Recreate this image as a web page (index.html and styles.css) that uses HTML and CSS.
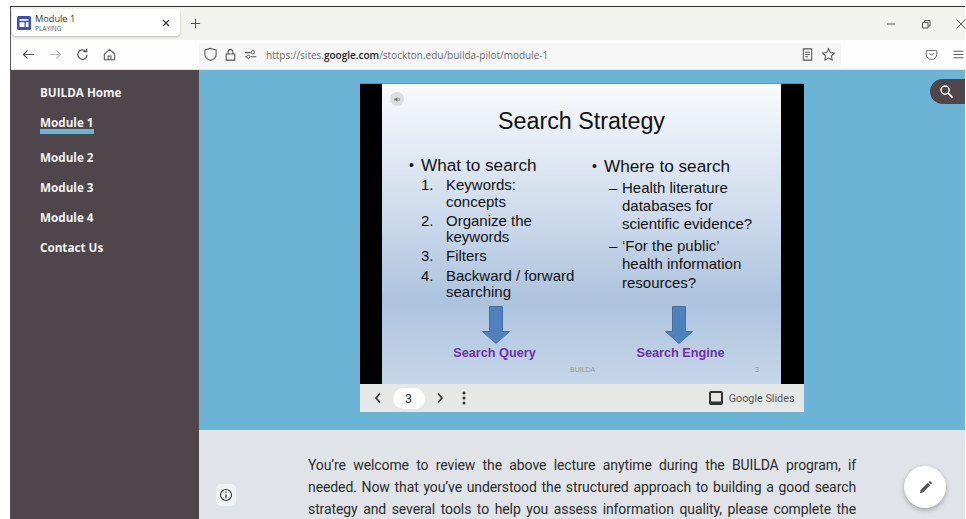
FILE: index.html
```html
<!DOCTYPE html>
<html lang="en">
<head>
<meta charset="utf-8">
<title>Module 1</title>
<link rel="stylesheet" href="styles.css">
</head>
<body>
<div class="window">
  <header class="tabstrip">
    <div class="tab">
      <svg class="tab-favicon" viewBox="0 0 14 14"><rect width="14" height="14" rx="1.5" fill="#3f51b5"/><path d="M2.500 3h9v1.800h-9zM2.500 6.200h5v4.800h-5zM8.800 6.200h2.700v4.800H8.800z" fill="#fff"/></svg>
      <div class="tab-label">
        <span class="tab-title">Module 1</span>
        <span class="tab-status">PLAYING</span>
      </div>
      <svg class="tab-close" viewBox="0 0 10 10"><path d="M2 2l6 6M8 2l-6 6" stroke="#333" stroke-width="1.200" fill="none"/></svg>
    </div>
    <svg class="new-tab" viewBox="0 0 12 12"><path d="M6 1v10M1 6h10" stroke="#444" stroke-width="1" fill="none"/></svg>
    <div class="window-controls">
      <svg viewBox="0 0 12 12"><path d="M2 6h8" stroke="#555" stroke-width="1" fill="none"/></svg>
      <svg viewBox="0 0 12 12"><path d="M2.500 4.500h5.500v5.500H2.500zM4.500 4.500V2.500H10V8H8" stroke="#555" stroke-width="1" fill="none"/></svg>
      <svg viewBox="0 0 12 12"><path d="M1.500 1.500l9 9M10.500 1.500l-9 9" stroke="#555" stroke-width="1" fill="none"/></svg>
    </div>
  </header>
  <nav class="toolbar">
    <div class="nav-buttons">
      <svg viewBox="0 0 16 16"><path d="M14 8H2.500M7 3.500L2.500 8 7 12.500" stroke="#555" stroke-width="1.200" fill="none"/></svg>
      <svg viewBox="0 0 16 16"><path d="M2 8h11.500M9 3.500L13.500 8 9 12.500" stroke="#b9b9b9" stroke-width="1.200" fill="none"/></svg>
      <svg viewBox="0 0 16 16"><path d="M13 8.500a5 5 0 1 1-1.500-4M12.500 1.500v3.500H9" stroke="#555" stroke-width="1.300" fill="none"/></svg>
      <svg viewBox="0 0 16 16"><path d="M2.500 7.500L8 2.500l5.500 5v6h-11zM6.500 13.500v-4h3v4" stroke="#555" stroke-width="1.100" fill="none"/></svg>
    </div>
    <div class="urlbar">
      <svg class="url-icon" viewBox="0 0 16 16"><path d="M8 1.500l6 1.700V8c0 3-2.800 5.200-6 6.500C4.800 13.200 2 11 2 8V3.200z" stroke="#555" stroke-width="1.100" fill="none"/></svg>
      <svg class="url-icon" viewBox="0 0 16 16"><path d="M3.500 7.500h9v6.500h-9zM5.500 7.500V5a2.500 2.500 0 0 1 5 0v2.500" stroke="#555" stroke-width="1.200" fill="none"/></svg>
      <svg class="url-icon" viewBox="0 0 16 16"><path d="M2 6h6M2 10.500h2M8 10.500h6" stroke="#555" stroke-width="1.100" fill="none"/><circle cx="10.500" cy="5.500" r="1.800" stroke="#555" fill="none"/><circle cx="5.700" cy="10.500" r="1.700" stroke="#555" fill="none"/></svg>
      <span class="url">https://sites.<b>google.com</b>/stockton.edu/builda-pilot/module-1</span>
      <svg class="url-icon reader" viewBox="0 0 16 16"><path d="M3.500 2h9v12h-9zM5.500 5.500h5M5.500 8h5M5.500 10.500h3" stroke="#555" stroke-width="1.100" fill="none"/></svg>
      <svg class="url-icon" viewBox="0 0 16 16"><path d="M8 1.800l1.900 4 4.400.6-3.200 3 .8 4.400L8 11.700l-3.900 2.100.8-4.400-3.200-3 4.400-.6z" stroke="#555" stroke-width="1.100" fill="none"/></svg>
    </div>
    <div class="toolbar-end">
      <svg viewBox="0 0 16 16"><path d="M2.500 3h11c.6 0 1 .4 1 1v3.500a6.500 6.500 0 0 1-13 0V4c0-.6.4-1 1-1zM5.500 6.500L8 9l2.500-2.500" stroke="#555" stroke-width="1.100" fill="none"/></svg>
      <svg viewBox="0 0 16 16"><path d="M2 4h12M2 8h12M2 12h12" stroke="#555" stroke-width="1.200" fill="none"/></svg>
    </div>
  </nav>
  <div class="site">
    <aside class="sidebar">
      <a class="nav-link">BUILDA Home</a>
      <a class="nav-link current">Module 1</a>
      <a class="nav-link">Module 2</a>
      <a class="nav-link">Module 3</a>
      <a class="nav-link">Module 4</a>
      <a class="nav-link">Contact Us</a>
    </aside>
    <main class="content">
      <section class="hero">
        <div class="deck">
          <div class="stage">
            <div class="slide">
              <span class="audio-badge"><svg viewBox="0 0 10 10"><path d="M1.500 4h1.500l2-1.700v5.400L3 6H1.500z" fill="#777"/><path d="M6.500 3.500a2 2 0 0 1 0 3" stroke="#777" fill="none"/></svg></span>
              <h1 class="slide-title">Search Strategy</h1>
              <div class="slide-columns">
                <div class="col-left">
                  <p class="lead"><span class="dot">•</span>What to search</p>
                  <ol class="steps">
                    <li><span>1.</span><div>Keywords:<br>concepts</div></li>
                    <li><span>2.</span><div>Organize the<br>keywords</div></li>
                    <li><span>3.</span><div>Filters</div></li>
                    <li><span>4.</span><div>Backward / forward<br>searching</div></li>
                  </ol>
                </div>
                <div class="col-right">
                  <p class="lead"><span class="dot">•</span>Where to search</p>
                  <ul class="places">
                    <li><span>–</span><div>Health literature<br>databases for<br>scientific evidence?</div></li>
                    <li><span>–</span><div>‘For the public’<br>health information<br>resources?</div></li>
                  </ul>
                </div>
              </div>
              <div class="slide-targets">
                <div class="target target-query">
                  <svg class="arrow" viewBox="0 0 28 38"><path d="M7.500.5h13v25h7L14 37.500.5 25.500h7z" fill="#4f81bd" stroke="#41709f"/></svg>
                  <strong>Search Query</strong>
                </div>
                <div class="target target-engine">
                  <svg class="arrow" viewBox="0 0 28 38"><path d="M7.500.5h13v25h7L14 37.500.5 25.500h7z" fill="#4f81bd" stroke="#41709f"/></svg>
                  <strong>Search Engine</strong>
                </div>
              </div>
              <div class="slide-foot"><span class="foot-name">BUILDA</span><span class="foot-page">3</span></div>
            </div>
          </div>
          <div class="deck-bar">
            <svg class="chev" viewBox="0 0 8 12"><path d="M6 1.500L2 6l4 4.500" stroke="#333" stroke-width="1.600" fill="none"/></svg>
            <span class="page-pill">3</span>
            <svg class="chev" viewBox="0 0 8 12"><path d="M2 1.500L6 6l-4 4.500" stroke="#333" stroke-width="1.600" fill="none"/></svg>
            <svg class="kebab" viewBox="0 0 4 14"><circle cx="2" cy="2" r="1.500" fill="#333"/><circle cx="2" cy="7" r="1.500" fill="#333"/><circle cx="2" cy="12" r="1.500" fill="#333"/></svg>
            <svg class="slides-logo" viewBox="0 0 14 14"><rect x="1" y="1" width="12" height="12" rx="1.200" fill="#e6e8e8" stroke="#333" stroke-width="2"/><rect x="1" y="10.500" width="12" height="2.500" fill="#333"/></svg>
            <span class="slides-name">Google Slides</span>
          </div>
        </div>
        <div class="search-pill"><svg viewBox="0 0 16 16"><circle cx="6.500" cy="6.500" r="4.400" stroke="#fff" stroke-width="1.500" fill="none"/><path d="M9.800 9.800l4.700 4.700" stroke="#fff" stroke-width="1.700"/></svg></div>
      </section>
      <section class="lecture-note">
        <p>You’re welcome to review the above lecture anytime during the BUILDA program, if needed. Now that you’ve understood the structured approach to building a good search strategy and several tools to help you assess information quality, please complete the</p>
      </section>
      <button class="info-button"><svg viewBox="0 0 14 14"><circle cx="7" cy="7" r="5.500" stroke="#333" stroke-width="1.100" fill="none"/><path d="M7 6.200v4" stroke="#333" stroke-width="1.200"/><circle cx="7" cy="4.300" r=".8" fill="#333"/></svg></button>
      <button class="edit-button"><svg viewBox="0 0 16 16"><path d="M2 14l.8-3.300 7.700-7.700 2.500 2.500-7.700 7.700zM11.300 2.200l.9-.9c.3-.3.700-.3 1 0l1.500 1.500c.3.300.3.700 0 1l-.9.900z" fill="#555"/></svg></button>
    </main>
  </div>
</div>
</body>
</html>
```
FILE: styles.css
```css
* { box-sizing: border-box; }

html, body {
  margin: 0;
  height: 519px;
  overflow: hidden;
  background: #fff;
}

body {
  padding: 6px 1px 0 10px;
  font-family: "Liberation Sans", Arial, sans-serif;
}

.window {
  height: 513px;
  display: flex;
  flex-direction: column;
  border-top: 1px solid #2e2e2e;
  border-left: 1px solid #555;
}

/* Browser chrome */
.tabstrip {
  height: 33px;
  flex: none;
  display: flex;
  align-items: flex-start;
  background: #f2f2ee;
  padding: 2px 0 0 1px;
}

.tab {
  width: 168px;
  height: 27px;
  display: flex;
  align-items: center;
  background: #fff;
  border-radius: 4px;
  box-shadow: 0 1px 2px rgba(0, 0, 0, .25);
  padding: 0 8px 0 5px;
}

.tab-favicon { width: 14px; height: 14px; flex: none; }

.tab-label {
  flex: 1;
  display: flex;
  flex-direction: column;
  margin-left: 4px;
  line-height: 10px;
  font-family: "Open Sans", sans-serif;
}

.tab-title { font-size: 9.200px; line-height: 11px; color: #333; }
.tab-status { font-size: 6.500px; line-height: 9px; color: #555; }

.tab-close { width: 10px; height: 10px; flex: none; margin-right: 1px; }

.new-tab { width: 11px; height: 11px; margin: 9px 0 0 10px; }

.window-controls {
  margin-left: auto;
  margin-right: -2px;
  display: flex;
  gap: 23px;
  padding-top: 9px;
}

.window-controls svg { width: 12px; height: 12px; }

.toolbar {
  height: 30px;
  flex: none;
  display: flex;
  align-items: center;
  background: #fdfdfd;
  border-bottom: 1px solid #e4e4e4;
}

.nav-buttons {
  width: 188px;
  flex: none;
  display: flex;
  gap: 12px;
  padding-left: 10px;
}

.nav-buttons svg { width: 15px; height: 15px; }

.urlbar {
  width: 646px;
  height: 24px;
  display: flex;
  align-items: center;
  gap: 5px;
  background: #f6f6f6;
  border-radius: 3px;
  padding: 0 5px 0 4px;
}

.url-icon { width: 15px; height: 15px; flex: none; }
.reader { margin-right: 1px; }

.url {
  flex: 1;
  font-family: "Open Sans", sans-serif;
  font-size: 10px;
  padding-left: 3px;
  color: #6b6b6b;
  white-space: nowrap;
}

.url b { font-weight: 600; color: #222; }

.toolbar-end {
  display: flex;
  gap: 14px;
  margin-left: 84px;
}

.toolbar-end svg { width: 13px; height: 13px; }

/* Site layout */
.site {
  flex: 1;
  min-height: 0;
  display: flex;
}

.sidebar {
  width: 188px;
  flex: none;
  display: flex;
  flex-direction: column;
  background: #4e464a;
  padding: 14px 0 0 29px;
  font-family: "Open Sans", sans-serif;
  font-weight: 700;
  font-size: 11.700px;
  color: #f4f2f2;
}

.nav-link {
  display: block;
  height: 30px;
  line-height: 17px;
}

.nav-link.current {
  position: relative;
  height: 35px;
}

.nav-link.current::after {
  content: "";
  position: absolute;
  left: 0;
  top: 15px;
  width: 54px;
  height: 5px;
  background: #6cb4d6;
}

.content {
  flex: 1;
  min-width: 0;
  position: relative;
  display: flex;
  flex-direction: column;
  overflow: hidden;
  background: #e0e4e8;
}

.hero {
  height: 360px;
  flex: none;
  position: relative;
  display: flex;
  justify-content: center;
  padding: 13px 1px 0 0;
  background: #6cb4d6;
}

.deck { width: 444px; height: 329px; display: flex; flex-direction: column; }

.stage {
  height: 301px;
  flex: none;
  display: flex;
  justify-content: center;
  background: #000;
  border-top: 1px solid #7d8a92;
}

.slide {
  width: 399px;
  position: relative;
  display: flex;
  flex-direction: column;
  color: #111;
  background: linear-gradient(#f8fafc 0%, #cfdcec 42%, #adc3de 72%, #c6d6e9 100%);
}

.audio-badge {
  position: absolute;
  left: 8px;
  top: 8px;
  width: 14px;
  height: 14px;
  display: flex;
  align-items: center;
  justify-content: center;
  border-radius: 50%;
  background: #dcdee0;
}

.audio-badge svg { width: 9px; height: 9px; }

.slide-title {
  margin: 23px 0 0;
  font-size: 23.300px;
  line-height: 28px;
  font-weight: 400;
  text-align: center;
}

.slide-columns { display: flex; margin-top: 20px; height: 151px; }

.col-left { width: 183px; padding-left: 27px; flex: none; }
.col-right { flex: 1; padding-left: 27px; padding-top: 1px; }

.lead { margin: 0; display: flex; font-size: 17.200px; line-height: 21px; }
.dot { width: 12px; font-size: 14px; flex: none; }

.steps, .places { list-style: none; margin: 0; padding: 0; font-size: 15px; }

.steps { padding: 1px 0 0 12px; line-height: 16.500px; white-space: nowrap; }
.steps li { display: flex; margin-bottom: 2.700px; }
.steps li span { width: 25px; flex: none; }

.places { padding: 2px 0 0 17px; line-height: 18.200px; white-space: nowrap; }
.places li { display: flex; margin-bottom: 3.500px; }
.places li span { width: 13px; flex: none; }

.slide-targets { display: flex; height: 55px; }

.target {
  position: relative;
  width: 183px;
  display: flex;
  flex-direction: column;
  align-items: center;
  font-size: 12.700px;
  line-height: 15px;
  color: #7030a0;
}

.target-query { margin-left: 21px; }
.target-engine { margin-left: 3px; }

.arrow { width: 28px; height: 38px; margin-bottom: 2px; }
.target-query .arrow { margin-left: 3px; }
.target-engine .arrow { margin-right: 4px; }

.slide-foot {
  position: relative;
  font-size: 7px;
  line-height: 9px;
  color: #999;
  margin-top: 4px;
}

.foot-name { position: absolute; left: 188px; top: 0; }
.foot-page { position: absolute; left: 373px; top: 0; }

.deck-bar {
  height: 28px;
  flex: none;
  display: flex;
  align-items: center;
  background: #e6e8e8;
  padding: 0 9px 0 14px;
  font-size: 12px;
  color: #333;
}

.chev { width: 8px; height: 12px; flex: none; }

.page-pill {
  width: 32px;
  height: 21px;
  margin: 0 11px;
  border-radius: 11px;
  background: #fff;
  text-align: center;
  line-height: 21px;
  font-family: Roboto, sans-serif;
  font-size: 12.500px;
}

.kebab { width: 4px; height: 14px; margin-left: 18px; }
.slides-logo { width: 14px; height: 14px; margin-left: auto; }

.slides-name {
  margin-left: 6px;
  font-family: Roboto, sans-serif;
  font-size: 10.800px;
  color: #555;
}

.search-pill {
  position: absolute;
  right: 0;
  top: 9px;
  width: 35px;
  height: 25px;
  display: flex;
  align-items: center;
  padding-left: 9px;
  border-radius: 13px 0 0 13px;
  background: #4e464a;
}

.search-pill svg { width: 15px; height: 15px; }

.lecture-note { padding: 24px 109px 0 109px; }

.lecture-note p {
  margin: 0;
  font-family: Roboto, sans-serif;
  font-size: 14px;
  letter-spacing: -.1px;
  line-height: 22px;
  color: #2b2b2b;
  text-align: justify;
  text-align-last: justify;
}

.info-button {
  position: absolute;
  left: 17px;
  top: 414px;
  width: 20px;
  height: 22px;
  padding: 0;
  border: 0;
  border-radius: 5px;
  display: flex;
  align-items: center;
  justify-content: center;
  background: #f0f2f4;
}

.info-button svg { width: 14px; height: 14px; }

.edit-button {
  position: absolute;
  left: 705px;
  top: 396px;
  width: 42px;
  height: 42px;
  padding: 0;
  border: 0;
  border-radius: 50%;
  display: flex;
  align-items: center;
  justify-content: center;
  background: #fff;
  box-shadow: 0 2px 5px rgba(0, 0, 0, .3);
}

.edit-button svg { width: 15px; height: 15px; }
```
